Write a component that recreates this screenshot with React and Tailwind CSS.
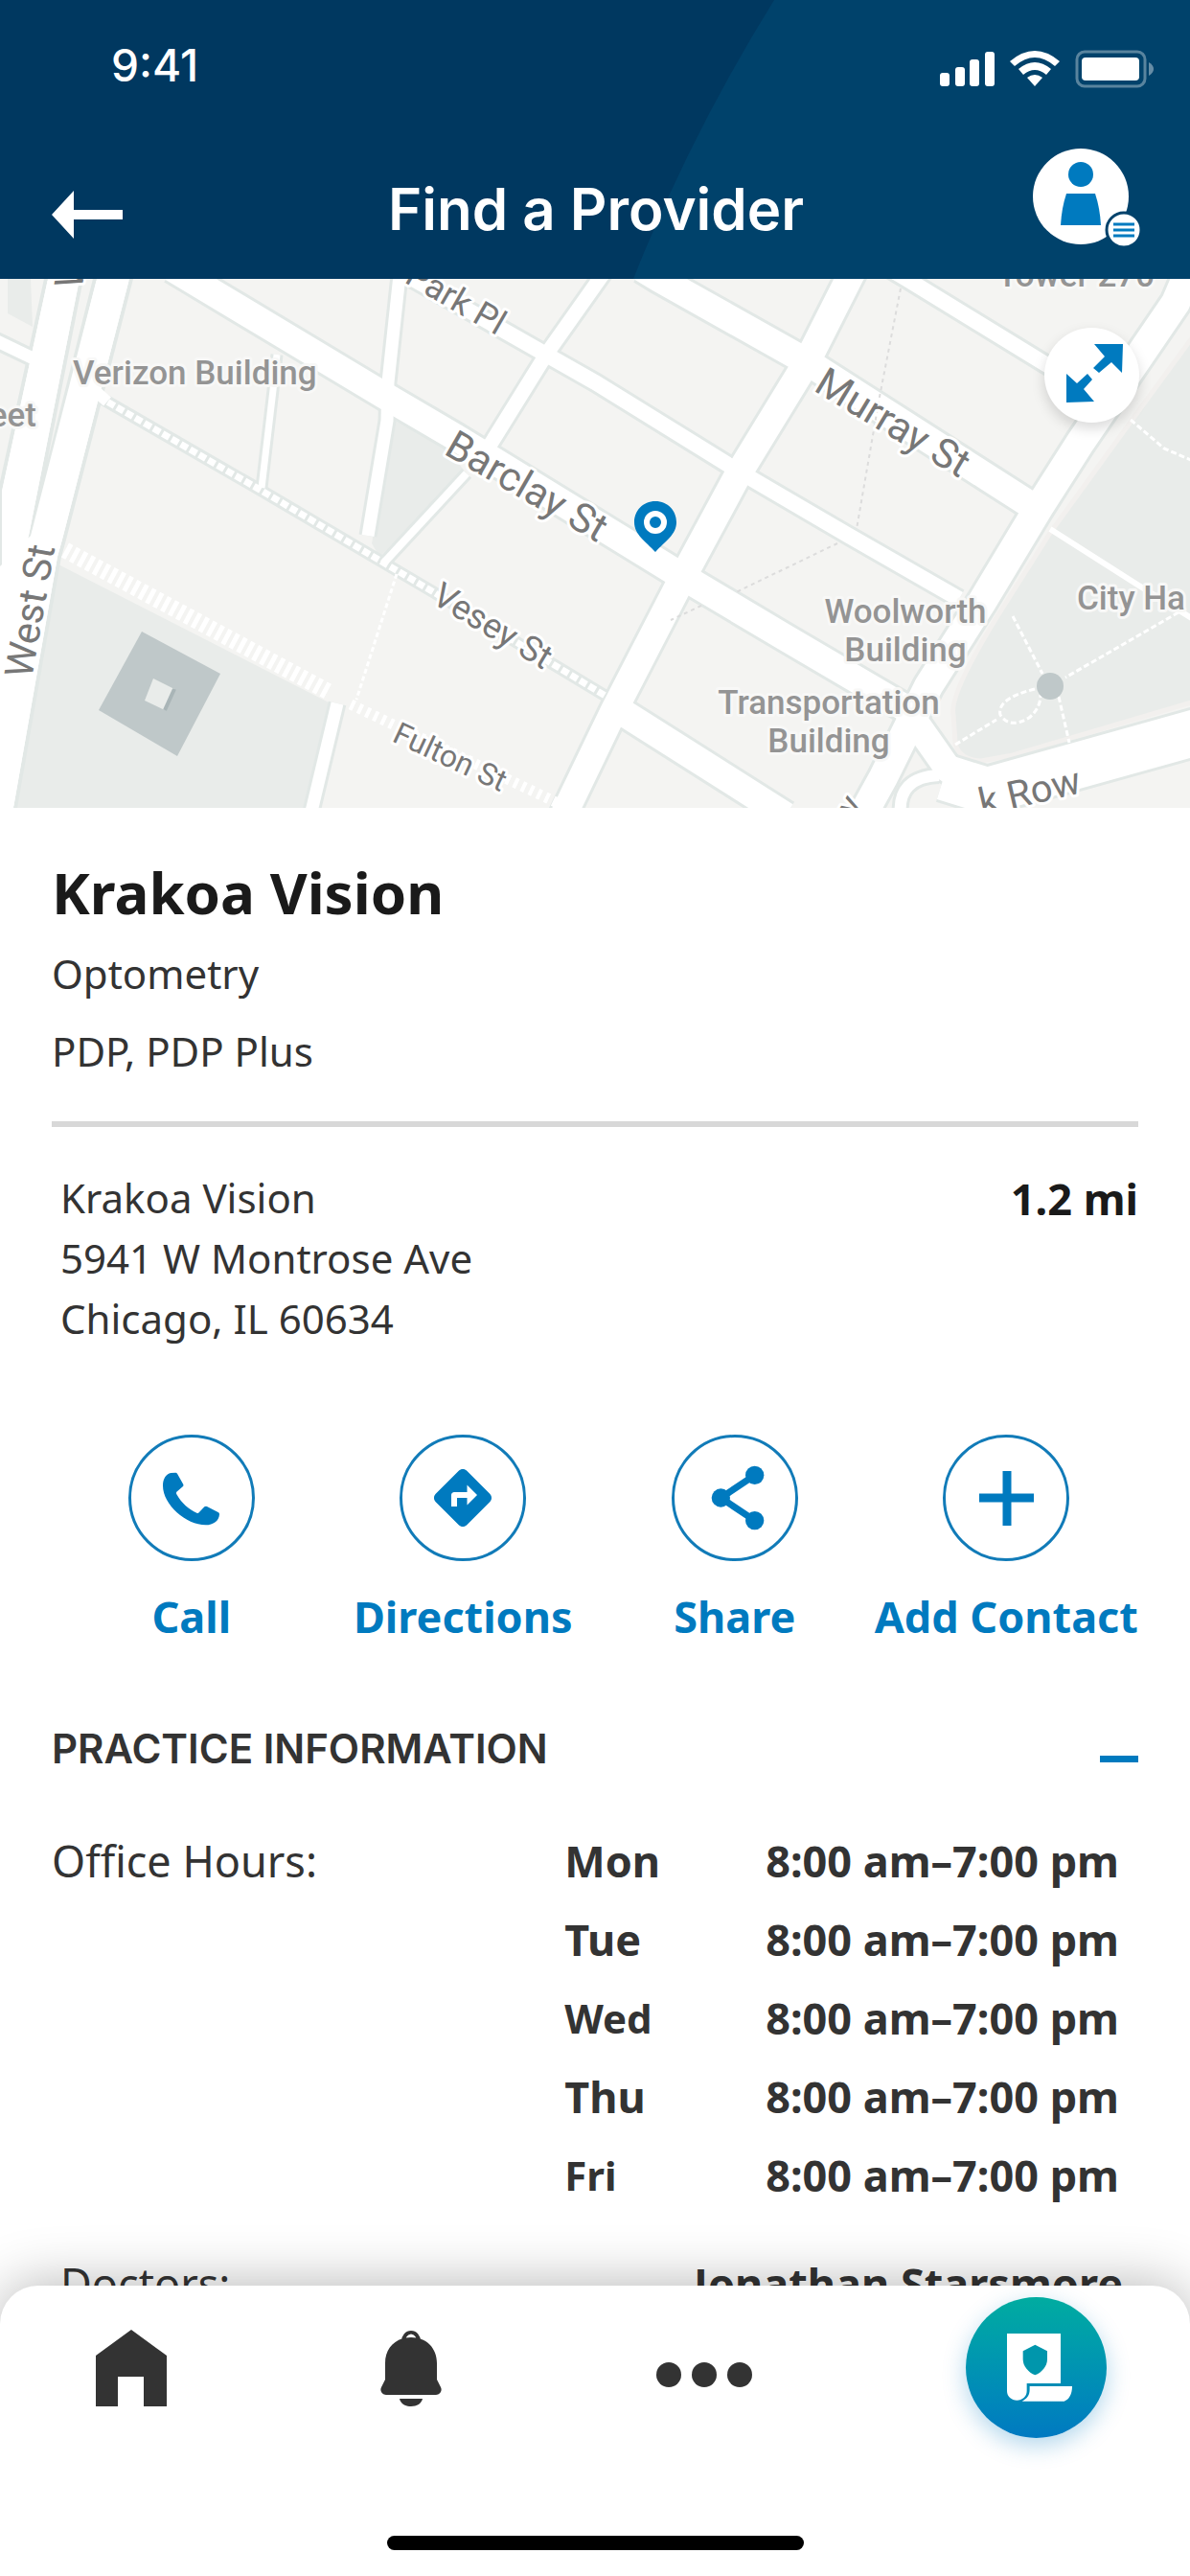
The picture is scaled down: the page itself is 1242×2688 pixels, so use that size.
import React, { useState } from "react";
import { MdDirections } from "react-icons/md";

const hours = [
  { day: "Mon", time: "8:00 am–7:00 pm" },
  { day: "Tue", time: "8:00 am–7:00 pm" },
  { day: "Wed", time: "8:00 am–7:00 pm", small: true },
  { day: "Thu", time: "8:00 am–7:00 pm" },
  { day: "Fri", time: "8:00 am–7:00 pm", small: true },
];

// street centre lines, drawn once as a wide casing and once in white
const streets = [
  { d: "M180 -11L400 121L475 165L708 308L819 374L945 448L990 512L1030 540", w: 28 },
  { d: "M431 0L570 79L621 108L768 199L886 268L1001 334", w: 16 },
  { d: "M670 -11L688 0L843 87L1082 240", w: 28 },
  { d: "M926 -12L946 0L1088 87L1140 118", w: 16 },
  { d: "M1242 -10L1227 25L1128 170L1084 239L1025 337L969 425L922 520L900 560", w: 30 },
  { d: "M890 -8L842 87L771 203L716 305L641 450L588 560", w: 28 },
  { d: "M630 -6L570 79L511 174", w: 15 },
  { d: "M487 203L400 297", w: 8 },
  { d: "M417 -4L405 108L404 148L384 268", w: 13 },
  { d: "M289 79L285 116L273 218", w: 7 },
  { d: "M640 446L820 560", w: 28 },
  { d: "M352 443L324 560", w: 13 },
  { d: "M-5 64L45 88", w: 13 },
  { d: "M1260 470L1030 534L985 520", w: 48 },
  { d: "M940 560Q936 520 980 518", w: 12 },
];

const StreetMap = () => {
  return (
    <svg
      viewBox="0 0 1242 552"
      className="block w-full h-auto"
      fontFamily="Roboto, 'Liberation Sans', sans-serif"
      role="img"
      aria-label="Map"
    >
      <rect width="1242" height="552" fill="#f4f4f2" />
      <g fill="#e9ecea">
        <path d="M8 0H32L34 50L8 36Z" />
        <path d="M59 297L345 443L317 552H16Z" />
        <path d="M412 148L463 174L487 203L396 290L388 276Z" />
        <path
          d="M1260 40L1183 145L1096 265L1041 352Q990 435 995 455L997 484Q1000 502 1024 503L1057 497L1260 437Z"
          stroke="#f2f0ee"
          strokeWidth="5"
        />
      </g>
      <g fill="none" stroke="#e2e8e6">
        {streets.map((s) => (
          <path key={s.d} d={s.d} strokeWidth={s.w + 6} />
        ))}
        <path d="M103 123L273 221L451 326L640 440" strokeWidth="13" />
      </g>
      <path
        d="M48 0H85L32 268L0 330V221ZM99 0H137L67 272L62 290L16 552H0V330L32 268Z"
        fill="#fff"
        stroke="#e2e8e6"
        strokeWidth="4"
      />
      <path d="M50 0H83L30 268L16 330H2V222ZM101 0H135L65 272L60 290L14 552H0V300L32 268Z" fill="#fff" />
      <g fill="none" stroke="#fff">
        {streets.map((s) => (
          <path key={s.d} d={s.d} strokeWidth={s.w} />
        ))}
        <path d="M80 100L112 128" strokeWidth="12" />
        <path d="M103 123L273 221L451 326L640 440" strokeWidth="7" strokeDasharray="8 3" />
        <path d="M68 283L345 432" strokeWidth="17" strokeDasharray="5 4" />
        <path d="M366 444L580 546" strokeWidth="11" strokeDasharray="4 5" />
        <path d="M414 308L372 439" strokeWidth="3" strokeDasharray="5 3" />
        <path d="M1096 261L1187 319L1250 358" strokeWidth="6" />
        <path
          d="M1180 147L1215 177L1250 192M1057 352L1088 412M1230 348L1112 416M1105 436L1116 484M997 486L1040 460M1080 428Q1040 438 1044 455Q1054 470 1074 458Q1086 448 1086 434"
          strokeWidth="3"
          strokeDasharray="6 3"
        />
      </g>
      <g fill="none" stroke="#dcdcdc" strokeWidth="2" strokeDasharray="4 4">
        <path d="M940 10L918 123L894 261M874 276L768 327M732 341L700 356" />
      </g>
      <path d="M148 368L230 412L185 498L103 450Z" fill="#bfc8c9" />
      <path d="M160 417L182 428L172 450L151 440Z" fill="#e9ecea" />
      <path d="M182 428L172 450" stroke="#a9b5b7" strokeWidth="4" />
      <circle cx="1096" cy="425" r="14" fill="#bfc8c9" />
      <g
        fontSize="35"
        fontWeight="500"
        fill="#949494"
        stroke="#f8f8f7"
        strokeWidth="6"
        strokeLinejoin="round"
        paintOrder="stroke"
      >
        <text x="76" y="110">Verizon Building</text>
        <text x="38" y="154" textAnchor="end">eet</text>
        <text x="945" y="359" textAnchor="middle">Woolworth</text>
        <text x="945" y="399" textAnchor="middle">Building</text>
        <text x="865" y="454" textAnchor="middle">Transportation</text>
        <text x="865" y="494" textAnchor="middle">Building</text>
        <text x="1124" y="345">City Ha</text>
        <text x="1123" y="8" textAnchor="middle">Tower 270</text>
      </g>
      <g
        fontSize="36"
        fill="#777"
        stroke="#fff"
        strokeWidth="6"
        strokeLinejoin="round"
        paintOrder="stroke"
      >
        <text transform="translate(462 182) rotate(30)" fontSize="42">Barclay St</text>
        <text transform="translate(848 116) rotate(31)" fontSize="42">Murray St</text>
        <text transform="translate(449 337) rotate(31)">Vesey St</text>
        <text transform="translate(421 3) rotate(30)">Park Pl</text>
        <text transform="translate(408 482) rotate(25)" fontSize="32">Fulton St</text>
        <text transform="translate(33 418) rotate(-80)" fontSize="41">West St</text>
        <text transform="translate(85 12) rotate(-80)" fontSize="41">W</text>
        <text transform="translate(1130 536) rotate(-13)" textAnchor="end" fontSize="40">k Row</text>
        <text transform="translate(901 548) rotate(-60)" textAnchor="end">y</text>
      </g>
      <path
        d="M684 232C671 232 662 242 662 254C662 267 674 274 684 285C694 274 706 267 706 254C706 242 697 232 684 232Z"
        fill="#007abf"
      />
      <circle cx="684" cy="254" r="9" fill="none" stroke="#fff" strokeWidth="6" />
    </svg>
  );
};

const Header = () => {
  return (
    <header className="relative overflow-hidden bg-[#003860] text-white font-['Inter',sans-serif]">
      <svg
        className="absolute right-0 top-0 h-full w-auto"
        viewBox="0 0 581 291"
        aria-hidden="true"
      >
        <path d="M147 0Q60 140 0 291H581V0Z" fill="#00426b" />
      </svg>
      <div className="relative flex items-start justify-between pt-[42px] pl-[116px] pr-[38px]">
        <span className="text-[46px] leading-[52px] font-medium">9:41</span>
        <svg className="mt-[10px]" width="223" height="40" viewBox="980 52 223 40" fill="#fff" aria-hidden="true">
          <rect x="980" y="76" width="10" height="14" rx="3" />
          <rect x="996" y="70" width="10" height="20" rx="3" />
          <rect x="1011" y="62" width="10" height="28" rx="3" />
          <rect x="1027" y="54" width="10" height="36" rx="3" />
          <path d="M1053 64Q1079 42 1105 64L1100 69Q1079 51 1058 69Z" />
          <path d="M1062 72Q1079 58 1096 72L1091 78Q1079 68 1067 78Z" />
          <path d="M1071 81Q1079 75 1087 81L1079 90Z" />
          <rect
            x="1123"
            y="54"
            width="71"
            height="36"
            rx="8"
            fill="none"
            stroke="#fff"
            strokeOpacity=".35"
            strokeWidth="3"
          />
          <rect x="1128" y="60" width="60" height="24" rx="4" />
          <path d="M1198 65Q1203 68 1203 72Q1203 76 1198 79Z" fillOpacity=".4" />
        </svg>
      </div>
      <div className="relative grid grid-cols-[1fr_auto_1fr] items-end pt-[61px] pb-[33px] pl-[54px] pr-[52px]">
        <button type="button" aria-label="Back" className="mb-[9px] w-fit cursor-pointer">
          <svg width="74" height="50" viewBox="0 0 74 50" fill="#fff">
            <path d="M0 25L23 0V20H74V30H23V50Z" />
          </svg>
        </button>
        <h1 className="mb-[10px] text-[60px] leading-[60px] font-semibold">Find a Provider</h1>
        <button type="button" aria-label="Account menu" className="ml-auto cursor-pointer">
          <svg width="112" height="103" viewBox="0 0 112 103">
            <circle cx="50" cy="50" r="50" fill="#fff" />
            <circle cx="50" cy="27" r="13" fill="#007abf" />
            <path d="M35 47H65Q70 62 71 80H29Q30 62 35 47Z" fill="#007abf" />
            <circle cx="95" cy="85" r="18" fill="#fff" stroke="#00426b" strokeWidth="3" />
            <path d="M84 79H106M84 85H106M84 91H106" stroke="#007abf" strokeWidth="3" />
          </svg>
        </button>
      </div>
    </header>
  );
};

const Action = ({ label, children }) => {
  return (
    <button type="button" className="flex flex-col items-center cursor-pointer text-[#007abf]">
      <span className="size-[132px] flex justify-center items-center rounded-full border-3 border-[#117bb8]">
        {children}
      </span>
      <span className="mt-7 text-[45px] leading-[60px] font-bold whitespace-nowrap">{label}</span>
    </button>
  );
};

const BottomNav = () => {
  return (
    <nav className="fixed bottom-0 inset-x-0 bg-white rounded-t-[40px] shadow-[0_0_60px_rgba(0,0,0,0.3)] pt-3 pb-[27px]">
      <div className="flex justify-between items-center pl-[100px] pr-[87px] text-[#333]">
        <a href="#home" aria-label="Home">
          <svg width="74" height="80" viewBox="0 0 74 80" fill="currentColor">
            <path d="M37 0L74 27V80H50V49H23V80H0V27Z" />
          </svg>
        </a>
        <a href="#alerts" aria-label="Notifications">
          <svg width="64" height="82" viewBox="0 0 64 82" fill="currentColor">
            <path d="M24 13A8 9 0 0 1 40 13" fill="none" stroke="currentColor" strokeWidth="4" />
            <path d="M32 9C16 9 5 20 5 36V53L1 61C-1 65 2 69 6 69H58C62 69 65 65 63 61L59 53V36C59 20 48 9 32 9Z" />
            <path d="M27 9Q32 2 37 9Q32 8 27 9Z" fill="#fff" />
            <path d="M20 73H44C43 78 38 81 32 81C26 81 21 78 20 73Z" />
          </svg>
        </a>
        <button type="button" aria-label="More" className="cursor-pointer">
          <svg width="100" height="40" viewBox="0 0 100 40" fill="currentColor">
            <circle cx="13" cy="27" r="13" />
            <circle cx="50" cy="27" r="13" />
            <circle cx="87" cy="27" r="13" />
          </svg>
        </button>
        <button
          type="button"
          aria-label="Policy"
          className="size-[147px] rounded-full cursor-pointer bg-linear-to-b from-[#00aca0] to-[#0079c1] shadow-[0_8px_24px_rgba(0,122,191,0.3)]"
        >
          <svg className="size-full" viewBox="24 36 441 441" fill="#fff">
            <path d="M153 150H321V306H215V330C215 347 201 359 184 359C167 359 153 347 153 330Z" />
            <path d="M224 315H357C357 340 347 357 332 362H200C217 354 224 342 224 325Z" />
            <path
              d="M241 185L279 205V230C279 253 262 271 241 280C220 271 203 253 203 230V205Z"
              fill="#0096ac"
            />
          </svg>
        </button>
      </div>
      <div className="mt-[102px] mx-auto w-[435px] h-[15px] rounded-full bg-black"></div>
    </nav>
  );
};

export default function App() {
  const [open, setOpen] = useState(true);

  return (
    <div className="min-h-screen bg-white text-[#333] font-['Noto_Sans',sans-serif]">
      <Header />
      <div className="relative">
        <StreetMap />
        <button
          type="button"
          aria-label="Expand map"
          className="absolute top-[51px] right-[53px] size-[99px] rounded-full bg-white cursor-pointer shadow-[0_6px_14px_rgba(0,0,0,0.15)]"
        >
          <svg className="size-full" viewBox="0 0 99 99" fill="#007abf">
            <path d="M52 17L82 17L81 47L70 36L57 47L51 42L63 30Z" />
            <path d="M23 48L34 58L45 48L50 54L41 64L52 77L23 78Z" />
          </svg>
        </button>
      </div>

      <main className="px-[54px] pt-[52px] pb-[320px]">
        <h2 className="text-[60px] leading-[72px] font-bold text-[#1a1a1a]">Krakoa Vision</h2>
        <div className="mt-2 pb-[33px] border-b-6 border-[#d8d8d8] text-[42px] leading-[81px]">
          <p>Optometry</p>
          <p>PDP, PDP Plus</p>
        </div>

        <div className="mt-[42px] pl-[9px] flex justify-between items-start text-[42px] leading-[63px]">
          <address className="not-italic">
            Krakoa Vision
            <br />
            5941 W Montrose Ave
            <br />
            Chicago, IL 60634
          </address>
          <span className="mt-px text-[45px] font-bold text-[#1a1a1a]">1.2 mi</span>
        </div>

        <div className="mt-[90px] -mr-1 pl-1 grid grid-cols-4">
          <Action label="Call">
            <svg className="size-full" viewBox="33 29 378 378" fill="currentColor">
              <path d="M157 140L172 139Q175 139 177 142L196 176Q198 180 194 183L175 199Q172 202 175 207C190 235 215 255 238 265Q242 267 245 264L262 246Q266 243 270 245L305 263Q309 265 309 269C308 290 290 303 266 303C205 303 132 240 132 180C132 158 142 143 157 140Z" />
            </svg>
          </Action>
          <Action label="Directions">
            <MdDirections className="size-[72px]" />
          </Action>
          <Action label="Share">
            <svg className="size-full" viewBox="45 45 378 378" fill="currentColor">
              <path d="M296 163L190 234L296 305" fill="none" stroke="currentColor" strokeWidth="21" />
              <circle cx="296" cy="163" r="29" />
              <circle cx="190" cy="234" r="29" />
              <circle cx="296" cy="305" r="29" />
            </svg>
          </Action>
          <Action label="Add Contact">
            <svg width="57" height="57" viewBox="0 0 57 57" stroke="currentColor" strokeWidth="9">
              <path d="M0 28H57M29 0V57" />
            </svg>
          </Action>
        </div>

        <div className="mt-[78px] flex justify-between items-end">
          <h3 className="text-[42px] leading-[60px] font-semibold font-['Inter',sans-serif]">
            PRACTICE INFORMATION
          </h3>
          <button
            type="button"
            aria-label="Toggle practice information"
            aria-expanded={open}
            className="pb-4 cursor-pointer"
            onClick={() => setOpen(!open)}
          >
            <span className="block w-10 h-[7px] bg-[#007abf]"></span>
          </button>
        </div>

        {open && (
          <>
            <div className="mt-[46px] pr-5 flex justify-between items-start text-[45px] leading-[82px]">
              <p>Office Hours:</p>
              <table>
                <tbody>
                  {hours.map((item) => (
                    <tr key={item.day}>
                      <th
                        scope="row"
                        className={`w-[210px] p-0 text-left font-bold ${item.small ? "text-[42px]" : ""}`}
                      >
                        {item.day}
                      </th>
                      <td className="p-0 font-bold whitespace-nowrap">{item.time}</td>
                    </tr>
                  ))}
                </tbody>
              </table>
            </div>
            <div className="mt-[42px] pl-[9px] pr-4 flex justify-between text-[45px] leading-[60px]">
              <p>Doctors:</p>
              <p className="font-bold">Jonathan Starsmore</p>
            </div>
          </>
        )}
      </main>

      <BottomNav />
    </div>
  );
}
